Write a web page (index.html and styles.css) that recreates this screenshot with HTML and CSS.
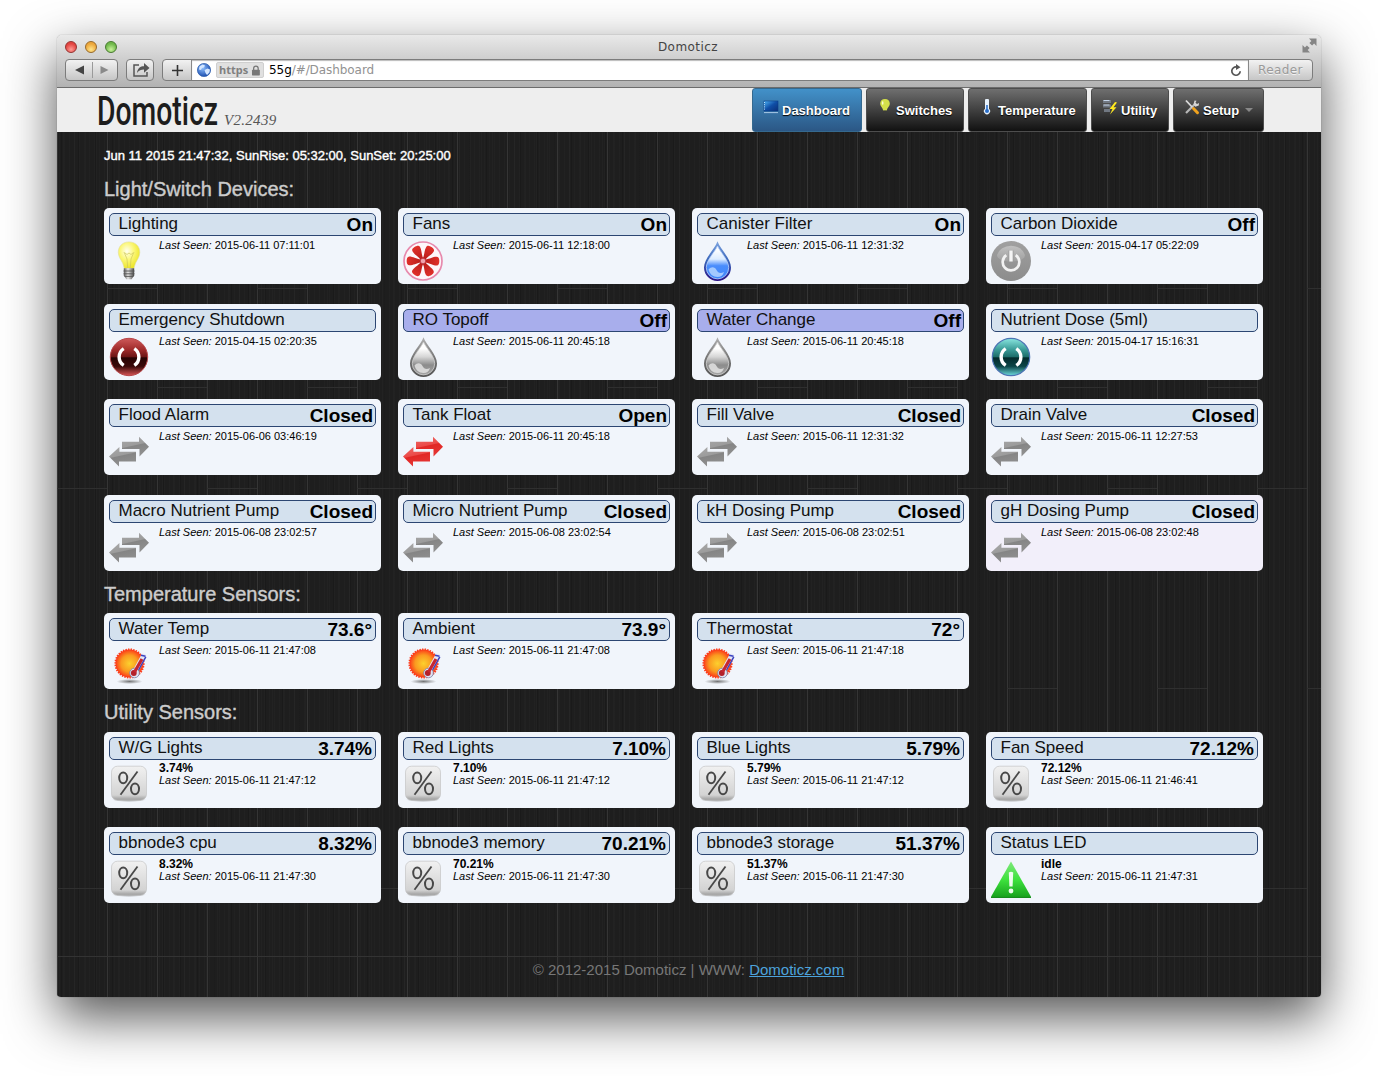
FILE: index.html
```html
<!DOCTYPE html>
<html lang="en">
<head>
<meta charset="utf-8">
<title>Domoticz</title>
<link rel="stylesheet" href="styles.css">
</head>
<body>
<svg class="defs" width="0" height="0" aria-hidden="true">
  <defs>
    <radialGradient id="gBulb" cx=".4" cy=".35" r=".65"><stop offset="0" stop-color="#fffef0"/><stop offset=".5" stop-color="#fbf777"/><stop offset="1" stop-color="#ece52a"/></radialGradient>
    <linearGradient id="gMetal"><stop offset="0" stop-color="#555"/><stop offset=".4" stop-color="#e6e6e6"/><stop offset="1" stop-color="#444"/></linearGradient>
    <linearGradient id="gBlueRim" x2="0" y2="1"><stop offset="0" stop-color="#7fa6e0"/><stop offset=".5" stop-color="#3763b8"/><stop offset="1" stop-color="#2b0f85"/></linearGradient>
    <linearGradient id="gBlueIn" x2="0" y2="1"><stop offset=".1" stop-color="#fff"/><stop offset=".4" stop-color="#dcecff"/><stop offset=".6" stop-color="#4a8dfc"/><stop offset="1" stop-color="#3f85fa"/></linearGradient>
    <linearGradient id="gGreyRim" x2="0" y2="1"><stop offset="0" stop-color="#b0b0b0"/><stop offset=".5" stop-color="#777"/><stop offset="1" stop-color="#555"/></linearGradient>
    <linearGradient id="gGreyIn" x2="0" y2="1"><stop offset=".2" stop-color="#fff"/><stop offset=".45" stop-color="#d6d6d6"/><stop offset=".7" stop-color="#8c8c8c"/><stop offset="1" stop-color="#a5a5a5"/></linearGradient>
    <linearGradient id="gRed" x2="0" y2="1"><stop offset="0" stop-color="#cf5a5a"/><stop offset=".3" stop-color="#a02b2b"/><stop offset=".5" stop-color="#6a1414"/><stop offset=".52" stop-color="#260303"/><stop offset=".75" stop-color="#3a0909"/><stop offset="1" stop-color="#d85555"/></linearGradient>
    <linearGradient id="gTeal" x2="0" y2="1"><stop offset="0" stop-color="#8ae6e0"/><stop offset=".3" stop-color="#3b9c98"/><stop offset=".5" stop-color="#1c6c69"/><stop offset=".52" stop-color="#032b2c"/><stop offset=".75" stop-color="#0b4547"/><stop offset="1" stop-color="#6fdde0"/></linearGradient>
    <linearGradient id="gPower" x2="0" y2="1"><stop offset="0" stop-color="#a0a0a0"/><stop offset="1" stop-color="#8c8c8c"/></linearGradient>
    <linearGradient id="gShine" x2="0" y2="1"><stop offset="0" stop-color="#c0c0c0"/><stop offset="1" stop-color="#a0a0a0"/></linearGradient>
    <linearGradient id="gArrow" x2=".3" y2="1"><stop offset="0" stop-color="#a9a9a9"/><stop offset=".5" stop-color="#9c9c9c"/><stop offset=".55" stop-color="#858585"/><stop offset="1" stop-color="#8f8f8f"/></linearGradient>
    <linearGradient id="gArrowRed" x2=".3" y2="1"><stop offset="0" stop-color="#ef6a67"/><stop offset=".5" stop-color="#eb4a48"/><stop offset=".55" stop-color="#e12725"/><stop offset="1" stop-color="#e53533"/></linearGradient>
    <radialGradient id="gSun"><stop offset="0" stop-color="#fcd02e"/><stop offset=".6" stop-color="#fa9a20"/><stop offset="1" stop-color="#fb3a1a"/></radialGradient>
    <radialGradient id="gShade"><stop offset="0" stop-color="#555" stop-opacity=".8"/><stop offset="1" stop-color="#555" stop-opacity="0"/></radialGradient>
    <linearGradient id="gKey" x2="0" y2="1"><stop offset="0" stop-color="#f1f1f1"/><stop offset=".85" stop-color="#d3d3d3"/><stop offset="1" stop-color="#9a9a9a"/></linearGradient>
    <linearGradient id="gGreen" x2="0" y2="1"><stop offset="0" stop-color="#7ee87b"/><stop offset=".5" stop-color="#3ee23d"/><stop offset="1" stop-color="#169e1c"/></linearGradient>
    <linearGradient id="gBlade" x2="0" y2="1"><stop offset="0" stop-color="#e0302a"/><stop offset="1" stop-color="#b91d1b"/></linearGradient>
    <radialGradient id="gGlobe" cx=".4" cy=".35" r=".65"><stop offset="0" stop-color="#8fc0ff"/><stop offset="1" stop-color="#1c4fb0"/></radialGradient>
    <linearGradient id="gScreen" x2="1" y2="1"><stop offset="0" stop-color="#4fb4f5"/><stop offset=".5" stop-color="#0f4ea6"/><stop offset="1" stop-color="#0b2f78"/></linearGradient>
  </defs>
  <symbol id="bulb" viewBox="0 0 40 40">
    <path d="M20 .9C13.300 .9 9.300 5.600 9.300 11.200c0 4.800 2.700 7.300 4.300 10.900.8 1.900 1.200 4 1.700 5.400h9.600c.5-1.400.8-3.500 1.700-5.400 1.600-3.600 4.200-6.100 4.200-10.900C30.800 5.600 26.700.9 20 .9z" fill="url(#gBulb)" stroke="#e3dfa0" stroke-width=".6"/>
    <path d="M18.700 27l-.7-9-3-7M21.300 27l.7-9 3-7M16 12l2 1.500 2-1.500 2 1.500 2-1.500" fill="none" stroke="#cfc75c" stroke-width=".7"/>
    <path d="M14.800 27.300h10.400v7.200l-2.600 3.700h-5.200l-2.600-3.700z" fill="url(#gMetal)"/>
    <path d="M14.500 30h11M14.500 32.800h11M15.500 35.400h9" stroke="#555" stroke-width=".9"/>
  </symbol>
  <symbol id="fan" viewBox="0 0 40 40">
    <circle cx="20" cy="20" r="19" fill="#fdf6fa" stroke="#e78aad" stroke-width="1.700"/>
    <g fill="url(#gBlade)" transform="rotate(30 20 20)">
      <path id="blade" d="M18.600 18C18 13 15.800 10.500 15.800 6.500c0-2 1.200-2.600 3.400-2.800 3-.2 5.300.6 5.300 2.600C24.500 10 22 13 21.400 18z"/>
      <use href="#blade" transform="rotate(60 20 20)"/><use href="#blade" transform="rotate(120 20 20)"/>
      <use href="#blade" transform="rotate(180 20 20)"/><use href="#blade" transform="rotate(240 20 20)"/>
      <use href="#blade" transform="rotate(300 20 20)"/>
    </g>
    <circle cx="20" cy="20" r="2.800" fill="#efa3ae" stroke="#b92b36" stroke-width=".8"/>
  </symbol>
  <symbol id="drop-blue" viewBox="0 0 40 40">
    <path d="M20.500 .3C18 8 7 17.500 7 26.500a13.500 13.500 0 0 0 27 0C34 17.500 23 8 20.500 .3z" fill="url(#gBlueRim)"/>
    <path d="M20.500 5C18 11 9.300 19 9.300 26.700a11.200 11.200 0 0 0 22.400 0C31.700 19 23 11 20.500 5z" fill="url(#gBlueIn)" stroke="#b9d2fa" stroke-width=".8"/>
    <path d="M11.500 28.500c3-3.500 6.500-2.500 8 .5s4 4 7.500 2c-1 3.500-3 5-6.500 5-4.500 0-8-3-9-7.500z" fill="#b4d3ff" opacity=".85"/>
  </symbol>
  <symbol id="drop-grey" viewBox="0 0 40 40">
    <path d="M20.500 .3C18 8 7 17.500 7 26.500a13.500 13.500 0 0 0 27 0C34 17.500 23 8 20.500 .3z" fill="url(#gGreyRim)"/>
    <path d="M20.500 5C18 11 9.300 19 9.300 26.700a11.200 11.200 0 0 0 22.400 0C31.700 19 23 11 20.500 5z" fill="url(#gGreyIn)" stroke="#d0d0d0" stroke-width=".8"/>
    <path d="M11.500 28.500c3-3.500 6.500-2.500 8 .5s4 4 7.500 2c-1 3.500-3 5-6.500 5-4.500 0-8-3-9-7.500z" fill="#e2e2e2" opacity=".85"/>
  </symbol>
  <symbol id="power" viewBox="0 0 40 40">
    <circle cx="20" cy="20" r="20" fill="url(#gPower)"/>
    <path d="M6 14a14.500 12.500 0 0 1 28 0c0 4-6 6.500-14 6.500S6 18 6 14z" fill="url(#gShine)"/>
    <path d="M15.300 14.200a8.300 8.300 0 1 0 9.400 0" fill="none" stroke="#f2f2f2" stroke-width="2.700"/>
    <path d="M20 9.500v11.500" stroke="#999" stroke-width="5"/>
    <path d="M20 9.500v11" stroke="#f4f4f4" stroke-width="3.400"/>
  </symbol>
  <symbol id="push-red" viewBox="0 0 40 40">
    <circle cx="20" cy="20" r="18.700" fill="url(#gRed)" stroke="#b8474a" stroke-width="1"/>
    <path d="M14.700 11.600a10 10 0 0 0 0 16.800M25.300 11.600a10 10 0 0 1 0 16.800" fill="none" stroke="#fff" stroke-width="3.400"/>
  </symbol>
  <symbol id="push-teal" viewBox="0 0 40 40">
    <circle cx="20" cy="20" r="18.700" fill="url(#gTeal)" stroke="#4d74b4" stroke-width="1.200"/>
    <path d="M14.700 11.600a10 10 0 0 0 0 16.800M25.300 11.600a10 10 0 0 1 0 16.800" fill="none" stroke="#fff" stroke-width="3.400"/>
  </symbol>
  <symbol id="contact" viewBox="0 0 40 40">
    <path d="M13 10.800h17V5.800l10 10-9.500 9.700V18H13z"/>
    <path d="M27 20.700H10.400v-4.700L0 25.500l10 10v-5h17z"/>
  </symbol>
  <symbol id="heat" viewBox="0 0 40 40">
    <ellipse cx="20.500" cy="35.500" rx="13" ry="2.500" fill="url(#gShade)"/>
    <circle cx="20.500" cy="17.500" r="14" fill="url(#gSun)"/>
    <circle cx="20.500" cy="17.500" r="14.200" fill="none" stroke="#fb3a1a" stroke-width="1.800" stroke-dasharray="1.400 1.200"/>
    <path d="M26 26L34.500 10.500" stroke="#e3e6f6" stroke-width="5.500" stroke-linecap="round"/>
    <path d="M28.500 26L36.800 10.800M32 9.200l4.500 1" fill="none" stroke="#3a42c0" stroke-width="1.500"/>
    <circle cx="25.500" cy="27" r="4.800" fill="#dfe3f2" stroke="#7a80a8" stroke-width=".8"/>
    <circle cx="24.800" cy="27" r="2.900" fill="#b3202a"/>
    <path d="M25.500 26l7.500-13" stroke="#c62630" stroke-width="3.200"/>
  </symbol>
  <symbol id="percent" viewBox="0 0 40 40">
    <ellipse cx="20" cy="34.500" rx="17" ry="2.600" fill="url(#gShade)"/>
    <rect x="2.500" y="1.200" width="35" height="34" rx="6" fill="url(#gKey)" stroke="#c4c4c4" stroke-width=".7"/>
    <g fill="none" stroke="#484848" stroke-width="2"><ellipse cx="14.200" cy="12.800" rx="4" ry="5.400"/><ellipse cx="26" cy="23.800" rx="4" ry="5.400"/><path d="M28.500 6.500L11.500 29.800" stroke-width="1.800"/></g>
  </symbol>
  <symbol id="alert" viewBox="0 0 40 40">
    <path d="M20 1.500L40 36.800v1.200H0v-1.200z" fill="url(#gGreen)"/>
    <path d="M0 37.400h40" stroke="#178a1c" stroke-width="1"/>
    <path d="M17.800 12.500q2.200-1.500 4.400 0l-.6 14h-3.200z" fill="#effcef"/><circle cx="20" cy="31" r="2.400" fill="#effcef"/>
  </symbol>
</svg>

<div class="window">
  <header class="chrome">
    <div class="titlebar">
      <div class="lights"><i class="light red"></i><i class="light amber"></i><i class="light green"></i></div>
      <div class="title">Domoticz</div>
      <svg class="expand" width="15" height="15" viewBox="0 0 15 15"><path d="M7 .5h7.500V8l-2.400-2.400-2 2L7.400 5l2-2zM8 14.500H.5V7l2.400 2.400 2-2L7.600 10l-2 2z" fill="#858585"/></svg>
    </div>
    <div class="toolbar">
      <div class="btn nav-btn"><svg width="52" height="20" viewBox="0 0 52 20"><path d="M18 5.500v9l-9-4.500z" fill="#444"/><path d="M34.500 6v8l8-4z" fill="#8a8a8a"/><path d="M26.500 2v16" stroke="#9a9a9a"/></svg></div>
      <div class="btn share-btn"><svg width="26" height="20" viewBox="0 0 26 20"><path d="M12 5H7v11h13v-4" fill="none" stroke="#555" stroke-width="1.500"/><path d="M10 13c.5-5 3.500-6.800 7-6.800V3l5.500 5-5.500 4.700V9.600c-3 0-5 .8-7 3.400z" fill="#555"/></svg></div>
      <div class="address">
        <div class="plus"><svg width="11" height="11" viewBox="0 0 11 11"><path d="M5.500 0v11M0 5.500h11" stroke="#333" stroke-width="1.600"/></svg></div>
        <div class="field">
          <svg class="globe" width="14" height="14" viewBox="0 0 14 14"><circle cx="7" cy="7" r="6.600" fill="url(#gGlobe)" stroke="#2b5cab" stroke-width=".7"/><path d="M2.500 3.500l3-2 2.500 1-1 2-2 .5-1 2-2-.5zM7.500 7l3-1.500 2.500 1-.5 3-2.500 2.500-1.500-2z" fill="#d3e6ff"/></svg>
          <span class="https">https<svg width="10" height="11" viewBox="0 0 10 11"><rect x="1" y="4.800" width="8" height="5.700" rx=".6" fill="#777"/><path d="M2.700 5V3.300a2.300 2.300 0 0 1 4.600 0V5" fill="none" stroke="#777" stroke-width="1.300"/></svg></span>
          <span class="url"><b>55g</b>/#/Dashboard</span>
          <svg class="reload" width="12" height="13" viewBox="0 0 12 13"><path d="M10.200 7.300A4.200 4.200 0 1 1 6.500 2.900" fill="none" stroke="#555" stroke-width="1.700"/><path d="M6 0l4.500 3.200L6 6z" fill="#555"/></svg>
        </div>
        <div class="reader">Reader</div>
      </div>
    </div>
  </header>

  <div class="sitebar">
    <div class="brand">
      <svg class="logo" width="122" height="44" viewBox="0 0 122 44"><text x="-1" y="37" textLength="121" lengthAdjust="spacingAndGlyphs">Domoticz</text></svg>
      <span class="version">V2.2439</span>
    </div>
    <nav class="menu">
      <a class="item active"><svg width="16" height="16" viewBox="0 0 16 16"><rect x="1" y="2" width="14" height="10" fill="url(#gScreen)" stroke="#0d3c85" stroke-width=".6"/><path d="M1.500 3v8" stroke="#bfe4ff" stroke-dasharray="1 1.200"/><path d="M1 13.600h14" stroke="#a8c8e6"/></svg>Dashboard</a>
      <a class="item switches"><svg width="16" height="16" viewBox="0 0 16 16"><path d="M8 0C5 0 3.200 2 3.200 4.500c0 3 2.600 4 2.900 7h3.800c.3-3 2.900-4 2.900-7C12.800 2 11 0 8 0z" fill="#d3e04a"/><path d="M6 2.500q-1 1.500 0 3" stroke="#fbfdd0" stroke-width="1.500" fill="none"/><path d="M6.200 11.800h3.600v2.500L8 15.600l-1.800-1.300z" fill="#3a3a3a"/></svg>Switches</a>
      <a class="item temp"><svg width="16" height="16" viewBox="0 0 16 16"><path d="M6 1.500a2 2 0 0 1 4 0v8.200a3.100 3.100 0 1 1-4 0z" fill="#e8f2fc"/><path d="M8 6v6" stroke="#2b6fc9" stroke-width="1.600"/><circle cx="8" cy="12" r="2" fill="#2b6fc9"/></svg>Temperature</a>
      <a class="item util"><svg width="16" height="16" viewBox="0 0 16 16"><path d="M1 1h8v3H1zM1 5.500h8v3H1zM2 10h6v3H2z" fill="#717882"/><path d="M1.500 1.500h6M1.500 6h6" stroke="#c5d4e8"/><path d="M13 3L7.500 10h3L8 15.500l6.500-7.300h-3L15 3.500z" fill="#ffe91f"/></svg>Utility</a>
      <a class="item setup"><svg width="16" height="16" viewBox="0 0 16 16"><path d="M2 14L11 5" stroke="#b8b8b8" stroke-width="2.200"/><path d="M9.500 5.500l1-4 2 .2-1 2 1.500 1.200 2-.8-.2 2.300-3.500 1.300z" fill="#d5d5d5"/><path d="M2 1.500l6.500 7" stroke="#ddd" stroke-width="1.800"/><path d="M9.500 9.500l4 4.200" stroke="#f0a21d" stroke-width="3" stroke-linecap="round"/></svg>Setup<i class="caret"></i></a>
    </nav>
  </div>

  <main class="page">
    <div class="clock">Jun 11 2015 21:47:32, SunRise: 05:32:00, SunSet: 20:25:00</div>

    <h2 class="first">Light/Switch Devices:</h2>
    <section class="grid">
      <article class="card"><div class="head"><span>Lighting</span><b>On</b></div><div class="body"><svg class="icon"><use href="#bulb"/></svg><p><em>Last Seen:</em> 2015-06-11 07:11:01</p></div></article>
      <article class="card"><div class="head"><span>Fans</span><b>On</b></div><div class="body"><svg class="icon"><use href="#fan"/></svg><p><em>Last Seen:</em> 2015-06-11 12:18:00</p></div></article>
      <article class="card"><div class="head"><span>Canister Filter</span><b>On</b></div><div class="body"><svg class="icon"><use href="#drop-blue"/></svg><p><em>Last Seen:</em> 2015-06-11 12:31:32</p></div></article>
      <article class="card"><div class="head"><span>Carbon Dioxide</span><b>Off</b></div><div class="body"><svg class="icon"><use href="#power"/></svg><p><em>Last Seen:</em> 2015-04-17 05:22:09</p></div></article>
      <article class="card"><div class="head"><span>Emergency Shutdown</span></div><div class="body"><svg class="icon"><use href="#push-red"/></svg><p><em>Last Seen:</em> 2015-04-15 02:20:35</p></div></article>
      <article class="card"><div class="head protected"><span>RO Topoff</span><b>Off</b></div><div class="body"><svg class="icon"><use href="#drop-grey"/></svg><p><em>Last Seen:</em> 2015-06-11 20:45:18</p></div></article>
      <article class="card"><div class="head protected"><span>Water Change</span><b>Off</b></div><div class="body"><svg class="icon"><use href="#drop-grey"/></svg><p><em>Last Seen:</em> 2015-06-11 20:45:18</p></div></article>
      <article class="card"><div class="head"><span>Nutrient Dose (5ml)</span></div><div class="body"><svg class="icon"><use href="#push-teal"/></svg><p><em>Last Seen:</em> 2015-04-17 15:16:31</p></div></article>
      <article class="card"><div class="head"><span>Flood Alarm</span><b>Closed</b></div><div class="body"><svg class="icon closed"><use href="#contact"/></svg><p><em>Last Seen:</em> 2015-06-06 03:46:19</p></div></article>
      <article class="card"><div class="head"><span>Tank Float</span><b>Open</b></div><div class="body"><svg class="icon open"><use href="#contact"/></svg><p><em>Last Seen:</em> 2015-06-11 20:45:18</p></div></article>
      <article class="card"><div class="head"><span>Fill Valve</span><b>Closed</b></div><div class="body"><svg class="icon closed"><use href="#contact"/></svg><p><em>Last Seen:</em> 2015-06-11 12:31:32</p></div></article>
      <article class="card"><div class="head"><span>Drain Valve</span><b>Closed</b></div><div class="body"><svg class="icon closed"><use href="#contact"/></svg><p><em>Last Seen:</em> 2015-06-11 12:27:53</p></div></article>
      <article class="card"><div class="head"><span>Macro Nutrient Pump</span><b>Closed</b></div><div class="body"><svg class="icon closed"><use href="#contact"/></svg><p><em>Last Seen:</em> 2015-06-08 23:02:57</p></div></article>
      <article class="card"><div class="head"><span>Micro Nutrient Pump</span><b>Closed</b></div><div class="body"><svg class="icon closed"><use href="#contact"/></svg><p><em>Last Seen:</em> 2015-06-08 23:02:54</p></div></article>
      <article class="card"><div class="head"><span>kH Dosing Pump</span><b>Closed</b></div><div class="body"><svg class="icon closed"><use href="#contact"/></svg><p><em>Last Seen:</em> 2015-06-08 23:02:51</p></div></article>
      <article class="card hover"><div class="head"><span>gH Dosing Pump</span><b>Closed</b></div><div class="body"><svg class="icon closed"><use href="#contact"/></svg><p><em>Last Seen:</em> 2015-06-08 23:02:48</p></div></article>
    </section>

    <h2>Temperature Sensors:</h2>
    <section class="grid">
      <article class="card"><div class="head value"><span>Water Temp</span><b>73.6°</b></div><div class="body"><svg class="icon"><use href="#heat"/></svg><p><em>Last Seen:</em> 2015-06-11 21:47:08</p></div></article>
      <article class="card"><div class="head value"><span>Ambient</span><b>73.9°</b></div><div class="body"><svg class="icon"><use href="#heat"/></svg><p><em>Last Seen:</em> 2015-06-11 21:47:08</p></div></article>
      <article class="card"><div class="head value"><span>Thermostat</span><b>72°</b></div><div class="body"><svg class="icon"><use href="#heat"/></svg><p><em>Last Seen:</em> 2015-06-11 21:47:18</p></div></article>
    </section>

    <h2 class="last">Utility Sensors:</h2>
    <section class="grid utility">
      <article class="card"><div class="head value"><span>W/G Lights</span><b>3.74%</b></div><div class="body"><svg class="icon"><use href="#percent"/></svg><p><strong>3.74%</strong><em>Last Seen:</em> 2015-06-11 21:47:12</p></div></article>
      <article class="card"><div class="head value"><span>Red Lights</span><b>7.10%</b></div><div class="body"><svg class="icon"><use href="#percent"/></svg><p><strong>7.10%</strong><em>Last Seen:</em> 2015-06-11 21:47:12</p></div></article>
      <article class="card"><div class="head value"><span>Blue Lights</span><b>5.79%</b></div><div class="body"><svg class="icon"><use href="#percent"/></svg><p><strong>5.79%</strong><em>Last Seen:</em> 2015-06-11 21:47:12</p></div></article>
      <article class="card"><div class="head value"><span>Fan Speed</span><b>72.12%</b></div><div class="body"><svg class="icon"><use href="#percent"/></svg><p><strong>72.12%</strong><em>Last Seen:</em> 2015-06-11 21:46:41</p></div></article>
      <article class="card"><div class="head value"><span>bbnode3 cpu</span><b>8.32%</b></div><div class="body"><svg class="icon"><use href="#percent"/></svg><p><strong>8.32%</strong><em>Last Seen:</em> 2015-06-11 21:47:30</p></div></article>
      <article class="card"><div class="head value"><span>bbnode3 memory</span><b>70.21%</b></div><div class="body"><svg class="icon"><use href="#percent"/></svg><p><strong>70.21%</strong><em>Last Seen:</em> 2015-06-11 21:47:30</p></div></article>
      <article class="card"><div class="head value"><span>bbnode3 storage</span><b>51.37%</b></div><div class="body"><svg class="icon"><use href="#percent"/></svg><p><strong>51.37%</strong><em>Last Seen:</em> 2015-06-11 21:47:30</p></div></article>
      <article class="card"><div class="head"><span>Status LED</span></div><div class="body"><svg class="icon"><use href="#alert"/></svg><p><strong>idle</strong><em>Last Seen:</em> 2015-06-11 21:47:31</p></div></article>
    </section>

    <footer>© 2012-2015 Domoticz | WWW: <a>Domoticz.com</a></footer>
  </main>
</div>
</body>
</html>
```
FILE: styles.css
```css
* { box-sizing: border-box; }
body {
  margin: 0;
  height: 1076px;
  padding: 35px 57px 0;
  background: #fff;
  font-family: "Liberation Sans", Arial, sans-serif;
  overflow: hidden;
}
.defs { display: block; height: 0; }
.window {
  width: 1264px;
  height: 962px;
  display: flex;
  flex-direction: column;
  border-radius: 5px 5px 4px 4px;
  overflow: hidden;
  box-shadow: 0 0 1px rgba(0,0,0,.5), 0 20px 52px rgba(0,0,0,.68);
}

/* Browser chrome */
.chrome {
  height: 53px;
  flex: none;
  background: linear-gradient(#e9e9e9, #cfcfcf 45%, #b2b2b2);
  border-bottom: 1px solid #6c6c6c;
  font-family: "DejaVu Sans", sans-serif;
}
.titlebar { height: 24px; display: grid; grid-template-columns: 120px 1fr 120px; align-items: center; padding: 0 4px 0 8px; }
.lights { display: flex; gap: 8px; }
.light { width: 12px; height: 12px; border-radius: 50%; border: 1px solid; }
.red { background: radial-gradient(circle at 50% 75%, #ff9a94, #e2433f 65%); border-color: #94312f; }
.amber { background: radial-gradient(circle at 50% 75%, #ffe58a, #eca63a 65%); border-color: #96692a; }
.green { background: radial-gradient(circle at 50% 75%, #c8f29b, #6fb84a 65%); border-color: #47792f; }
.title { font-size: 12px; line-height: 22px; color: #444; text-align: center; letter-spacing: .45px; padding-right: 6px; }
.expand { justify-self: end; margin-top: -3px; }
.toolbar { display: flex; height: 22px; padding: 0 8px; }
.btn, .address { border: 1px solid #7c7c7c; border-radius: 4px; background: linear-gradient(#f2f2f2, #c6c6c6); height: 22px; }
.nav-btn { width: 53px; margin-right: 8px; }
.share-btn { width: 28px; margin-right: 8px; }
.address { flex: 1; display: flex; overflow: hidden; }
.plus { width: 29px; display: grid; place-items: center; border-right: 1px solid #888; }
.field { flex: 1; background: #fff; display: flex; align-items: center; padding: 0 6px 0 5px; box-shadow: inset 0 1px 1px #bbb; }
.https { margin-left: 5px; height: 16px; padding: 0 2px; background: #e0e0e0; border: 1px solid #cfcfcf; border-radius: 2px; font: bold 11px/14px "Noto Sans", sans-serif; color: #808080; display: flex; align-items: center; gap: 3px; width: 48px; }
.url { font-size: 12px; color: #929292; margin-left: 5px; letter-spacing: -.07px; }
.url b { font-weight: normal; color: #000; }
.reload { margin-left: auto; }
.reader { width: 64px; border-left: 1px solid #888; font-size: 12px; line-height: 20px; text-align: center; color: #9a9a9a; letter-spacing: .4px; text-shadow: 0 1px #f2f2f2; }

/* Site header */
.sitebar { height: 44px; flex: none; background: #eee; display: flex; justify-content: space-between; padding: 0 57px 0 41px; }
.brand { display: flex; }
.logo text { font: 500 40px Roboto, sans-serif; fill: #1d1d1d; }
.version { font: italic 15px/18px "Liberation Serif", serif; color: #555; margin: 23px 0 0 4px; letter-spacing: .3px; }
.menu { display: flex; gap: 4px; }
.item {
  display: flex; width: 98px; height: 43.500px; padding: 0 0 0 11px;
  border: 1px solid #4d4d4d; border-radius: 3px;
  background: linear-gradient(#6f6f6f, #111);
  color: #fff; font-weight: bold; font-size: 13px; line-height: 44px; white-space: nowrap;
  text-shadow: 0 1px 1px #000;
}
.item svg { margin: 10px 3px 0 0; flex: none; }
.active { width: 110px; background: linear-gradient(#4291c9, #2b5785); border-color: #35698f; padding-left: 10px; }
.switches { padding-left: 10px; }
.switches svg { margin-right: 3px; }
.temp { width: 119px; padding-left: 10px; }
.util { width: 78px; padding-left: 10px; }
.setup { width: 91px; padding-left: 10px; }
.caret { border: 4px solid transparent; border-top-color: #888; border-bottom: 0; height: 0; margin: 19px 0 0 6px; }

/* Dark plank backdrop */
.page {
  flex: 1;
  padding: 0 58px 0 47px;
  background:
    linear-gradient(#333, #333) 0 824px / 100% 1px no-repeat,
    linear-gradient(90deg, #2f2f2f 50px, transparent 50px) 50px 156px / 150px 1px repeat-x,
    linear-gradient(90deg, #2f2f2f 50px, transparent 50px) 100px 255px / 150px 1px repeat-x,
    linear-gradient(90deg, #2f2f2f 50px, transparent 50px) 0 356px / 150px 1px repeat-x,
    linear-gradient(90deg, #2f2f2f 50px, transparent 50px) 50px 556px / 150px 1px repeat-x,
    linear-gradient(90deg, #2f2f2f 50px, transparent 50px) 100px 655px / 150px 1px repeat-x,
    linear-gradient(90deg, #2f2f2f 50px, transparent 50px) 0 756px / 150px 1px repeat-x,
    repeating-linear-gradient(90deg, #353535 0 1px, transparent 1px 50px),
    repeating-linear-gradient(90deg, transparent 0 6px, rgba(255,255,255,.02) 6px 7px, transparent 7px 11px),
    repeating-linear-gradient(90deg, transparent 0 4px, rgba(0,0,0,.14) 4px 5px, transparent 5px 17px),
    repeating-linear-gradient(90deg, transparent 0 2px, rgba(255,255,255,.015) 2px 3px, transparent 3px 5px),
    #1e1e1e;
}
.clock { height: 46px; line-height: 47px; font-size: 13px; color: #fff; -webkit-text-stroke: .4px #fff; }
h2 { margin: 0; padding: 12px 0 8px; font-size: 20px; line-height: 22px; font-weight: normal; color: #ccc; -webkit-text-stroke: .4px #ccc; }
h2.first { padding-top: 0; }
h2.last { padding-bottom: 9px; }
.grid { display: grid; grid-template-columns: repeat(4, 277px); gap: 19.600px 17px; }
.card { height: 76px; background: #f1f5fb; border-radius: 5px; padding: 5px 5px 0; }
.card.hover { background: #f2effa; }
.head {
  height: 23px; display: flex; justify-content: space-between;
  border: 1px solid #2c4672; border-radius: 5px; background: #d4e1ee;
  padding: 0 2px 0 8.500px; font-size: 17px; line-height: 20px; color: #111; white-space: nowrap;
}
.head b { font-size: 19px; line-height: 21px; color: #000; }
.head.value { padding-right: 3px; }
.head.protected { background: #a8aeec; }
.body { display: flex; gap: 10px; padding-top: 5px; }
.icon { width: 40px; height: 40px; flex: none; }
.closed, .open { margin-top: -1px; }
.closed { fill: url(#gArrow); }
.open { fill: url(#gArrowRed); }
.body p { margin: -2px 0 0; font-size: 11px; line-height: 12px; color: #000; white-space: nowrap; }
.utility .body p { margin-top: -1.400px; }
.body strong { display: block; font-size: 12px; line-height: 11px; }
footer { margin-top: 57px; padding-left: 10px; text-align: center; font-size: 15px; line-height: 20px; color: #777; }
footer a { color: #4da3dc; text-decoration: underline; }
```
